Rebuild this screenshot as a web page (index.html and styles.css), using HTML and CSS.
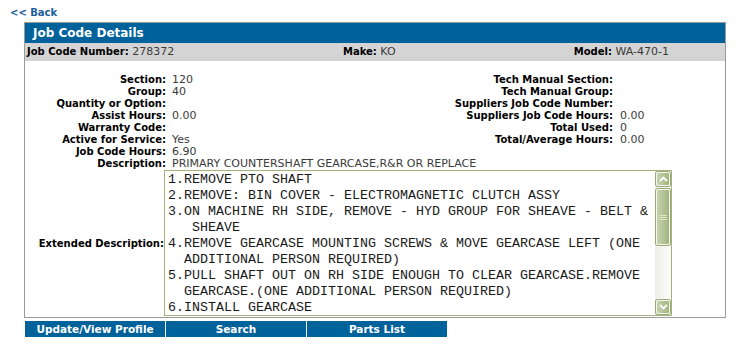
FILE: index.html
```html
<!DOCTYPE html>
<html lang="en">
<head>
    <meta charset="UTF-8">
    <title>Job Code Details</title>
    <link rel="stylesheet" href="styles.css">
</head>
<body>
    <a class="back" href="#">&lt;&lt; Back</a>

    <div class="panel">
        <div class="panel-title">Job Code Details</div>

        <div class="summary">
            <span><b>Job Code Number:</b> 278372</span>
            <span><b>Make:</b> KO</span>
            <span><b>Model:</b> WA-470-1</span>
        </div>

        <div class="details">
            <dl class="col col-left">
                <dt>Section:</dt><dd>120</dd>
                <dt>Group:</dt><dd>40</dd>
                <dt>Quantity or Option:</dt><dd></dd>
                <dt>Assist Hours:</dt><dd>0.00</dd>
                <dt>Warranty Code:</dt><dd></dd>
                <dt>Active for Service:</dt><dd>Yes</dd>
                <dt>Job Code Hours:</dt><dd>6.90</dd>
                <dt>Description:</dt><dd class="nowrap">PRIMARY COUNTERSHAFT GEARCASE,R&amp;R OR REPLACE</dd>
            </dl>
            <dl class="col col-right">
                <dt>Tech Manual Section:</dt><dd></dd>
                <dt>Tech Manual Group:</dt><dd></dd>
                <dt>Suppliers Job Code Number:</dt><dd></dd>
                <dt>Suppliers Job Code Hours:</dt><dd>0.00</dd>
                <dt>Total Used:</dt><dd>0</dd>
                <dt>Total/Average Hours:</dt><dd>0.00</dd>
            </dl>
        </div>

        <div class="extended">
            <span class="ext-label">Extended Description:</span>
            <div class="textbox">
<pre class="textbox-text">1.REMOVE PTO SHAFT
2.REMOVE: BIN COVER - ELECTROMAGNETIC CLUTCH ASSY
3.ON MACHINE RH SIDE, REMOVE - HYD GROUP FOR SHEAVE - BELT &amp;
   SHEAVE
4.REMOVE GEARCASE MOUNTING SCREWS &amp; MOVE GEARCASE LEFT (ONE
  ADDITIONAL PERSON REQUIRED)
5.PULL SHAFT OUT ON RH SIDE ENOUGH TO CLEAR GEARCASE.REMOVE
  GEARCASE.(ONE ADDITIONAL PERSON REQUIRED)
6.INSTALL GEARCASE</pre>
                <div class="scrollbar">
                    <span class="sb-btn">
                        <svg width="9" height="6" viewBox="0 0 9 6"><polyline points="1,5 4.5,1.5 8,5" fill="none" stroke="#fff" stroke-width="1.8"/></svg>
                    </span>
                    <span class="sb-thumb">
                        <svg width="7" height="5" viewBox="0 0 7 5"><path d="M0 0.5h7M0 2.5h7M0 4.5h7" stroke="#dfe8cc" stroke-width="1"/></svg>
                    </span>
                    <span class="sb-track"></span>
                    <span class="sb-btn">
                        <svg width="9" height="6" viewBox="0 0 9 6"><polyline points="1,1 4.5,4.5 8,1" fill="none" stroke="#fff" stroke-width="1.8"/></svg>
                    </span>
                </div>
            </div>
        </div>
    </div>

    <div class="tabs">
        <a href="#">Update/View Profile</a>
        <a href="#">Search</a>
        <a href="#">Parts List</a>
    </div>
</body>
</html>
```

FILE: styles.css
```css
body {
    margin: 0;
    padding: 7px 10px;
    font-family: "DejaVu Sans", Verdana, sans-serif;
    font-size: 11px;
    color: #3a3a3a;
    background-color: white;
}
b {
    color: #000;
    font-size: 10px;
}
.back {
    display: block;
    width: max-content;
    height: 15px;
    line-height: 12px;
    color: #1d5c9b;
    font-weight: bold;
    font-size: 10px;
    text-decoration: none;
}
.panel {
    margin-left: 14px;
    width: 700px;
    border: 1px solid #9a9a9a;
    padding-bottom: 1px;
}
.panel-title {
    background-color: #00629a;
    color: white;
    font-weight: bold;
    font-size: 12px;
    height: 20px;
    line-height: 20px;
    padding-left: 8px;
}
.summary {
    display: grid;
    grid-template-columns: 316px 1fr auto;
    background-color: #d4d4d4;
    height: 18px;
    line-height: 18px;
    padding: 0 56px 0 2px;
}
.details {
    display: flex;
    padding-top: 13px;
}
.col {
    display: grid;
    margin: 0;
    line-height: 12px;
}
.col-left {
    grid-template-columns: 141px 1fr;
    column-gap: 6px;
    width: 375px;
}
.col-right {
    grid-template-columns: 213px 1fr;
    column-gap: 7px;
    align-content: start;
}
.col dt {
    text-align: right;
    font-weight: bold;
    font-size: 10px;
    color: #000;
    white-space: nowrap;
}
.col dd {
    margin: 0;
    min-height: 12px;
}
.nowrap {
    white-space: nowrap;
}
.extended {
    display: flex;
    align-items: center;
}
.ext-label {
    width: 139px;
    text-align: right;
    font-weight: bold;
    font-size: 10px;
    color: #000;
}
.textbox {
    display: flex;
    width: 506px;
    height: 144px;
    border: 1px solid #a3b27f;
    background-color: white;
    overflow: hidden;
}
.textbox-text {
    flex: 1;
    margin: 0;
    padding: 1px 0 0 3px;
    font-family: "Liberation Mono", "Courier New", monospace;
    font-size: 13.33px;
    line-height: 16px;
    color: #1a1a1a;
    overflow: hidden;
}
.scrollbar {
    display: flex;
    flex-direction: column;
    width: 16px;
    background: linear-gradient(to right, #eeeee6, #fdfdfb);
}
.sb-btn,
.sb-thumb {
    display: flex;
    align-items: center;
    justify-content: center;
    margin: 1px;
    border: 1px solid #f4f7ee;
    border-radius: 2px;
    background: linear-gradient(to right, #c6d3ad, #a2b47f);
    box-shadow: 0 0 0 1px #98a978;
}
.sb-btn {
    height: 12px;
}
.sb-thumb {
    height: 54px;
    margin-top: 2px;
}
.sb-track {
    flex: 1;
}
.tabs {
    display: flex;
    gap: 1px;
    margin: 3px 0 0 15px;
}
.tabs a {
    width: 140px;
    height: 16px;
    line-height: 16px;
    text-align: center;
    background-color: #00629a;
    color: white;
    font-weight: bold;
    font-size: 10.5px;
    text-decoration: none;
}
```
